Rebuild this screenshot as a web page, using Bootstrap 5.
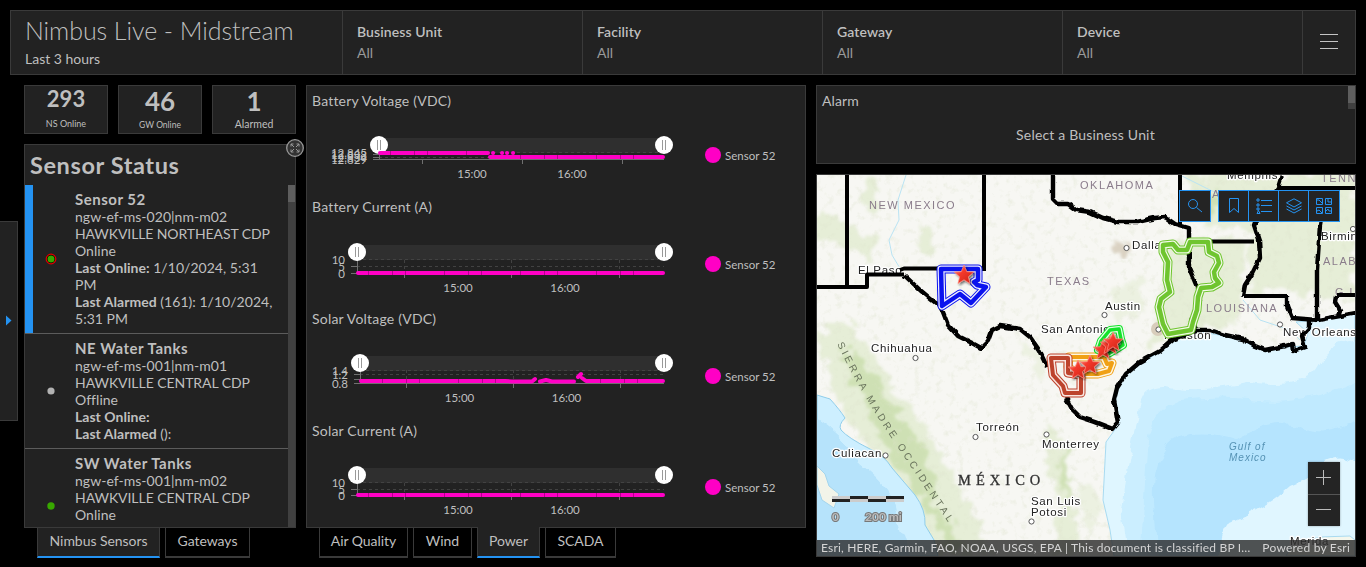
<!DOCTYPE html>
<html lang="en" data-bs-theme="dark">
<head>
<meta charset="utf-8">
<meta name="viewport" content="width=device-width, initial-scale=1">
<title>Nimbus Live - Midstream</title>
<link href="https://cdn.jsdelivr.net/npm/bootstrap@5.3.0/dist/css/bootstrap.min.css" rel="stylesheet">
<style>
:root{--pane:#222;--edge:#3a3a3a;--ink:#bfbfbf;--accent:#2493f2;--pink:#ff00c5}
body{background:#000;color:var(--ink);font-family:Lato,"Noto Sans",sans-serif;font-size:14px;line-height:17px;width:1366px;height:567px;overflow:hidden}
h1,h2,h3,h4{color:var(--ink)!important}
.pane{background:var(--pane);border:1px solid var(--edge)}
.topbar{height:65px}
.brand{width:331px;padding:0 14px}
.brand h1{font-size:25px;font-weight:300;line-height:30px;margin:4px 0 5px;letter-spacing:-.06px;white-space:nowrap}
.filter{width:240px;border-left:1px solid var(--edge);padding:10px 14px;line-height:21px}
.filter b{font-weight:600;letter-spacing:.1px}
.filter span{color:#9a9a9a}
.menu{border-left:1px solid var(--edge)}
.gauge{width:84px;height:49px;text-align:center;white-space:nowrap}
.gauge strong{display:block;font-size:22px;line-height:26px}
.gauge small{display:block;font-size:9px;line-height:24px}
.left-col{width:272px}.mid-col{width:500px}.right-col{width:540px}
.listbox{height:384px}
.listbox h2{font-size:23.5px;font-weight:700;line-height:40px;height:40px;margin:0;padding:0 0 0 5px;letter-spacing:.6px}
.rows{height:342px;overflow:hidden}
.item{border-bottom:1px solid #5c5c5c;display:flex;white-space:nowrap}
.item .dot{width:51px;flex:none;display:flex;justify-content:center;align-items:center}
.item .txt{padding:5px 0 6px;margin-left:-1px;letter-spacing:.03px}
.item h3{font-size:15px;font-weight:700;line-height:18px;margin:0;letter-spacing:.5px}
.item.on{box-shadow:inset 8px 0 var(--accent)}
.track{width:7px;background:#404040}
.track i{display:block;height:17px;background:#5e5e5e}
.tabbar{height:30px}
.tabbar button{background:#000;color:var(--ink);border:1px solid var(--edge);border-top:0;border-bottom-width:2px;height:30px;padding:0 0 3px;font-size:14px;letter-spacing:-.05px}
.tabbar button.on{background:var(--pane);border-bottom-color:var(--accent);margin-top:-1px;height:31px;padding-bottom:2px}
.charts{height:443px}
.chart h4{font-size:14px;font-weight:400;line-height:30px;height:30px;margin:0;padding-left:5px;letter-spacing:.2px}
.key{font-size:11.5px;padding-left:8px;height:18px}
.key i{width:16px;height:16px;border-radius:50%;background:var(--pink);margin-right:4px}
.plot text{font-size:11.5px;fill:var(--ink)}
.band{fill:#2f2f2f}.grid-dash{stroke:#424242;stroke-dasharray:3 3}.axis{stroke:#707070}
.data{stroke:var(--pink);stroke-width:4;stroke-linecap:round;stroke-linejoin:round;fill:none}
.gaps{stroke:#b7008e;stroke-width:4;stroke-dasharray:1 23 1 12 1 38}
.alarm{height:79px;letter-spacing:.08px}
.mapbox{height:383px}
.tool{height:32px;background:#242424;border:1px solid var(--accent)}
.tool span{width:30px;display:flex;align-items:center;justify-content:center}
.tool span+span{border-left:1px solid var(--accent)}
.tool svg{stroke:var(--accent);fill:none}
.credit{height:16px;background:rgba(45,45,45,.82);font-size:12px;line-height:16px;color:#d4d4d4;padding:0 5px 0 4px;white-space:nowrap}
.credit span:first-child{letter-spacing:.19px}.credit span:last-child{letter-spacing:.22px}
.zoomer{right:15px;bottom:30px;width:32px;background:#242424;box-shadow:0 0 2px #0005}
.drawer{left:-1px;top:221px;width:19px;height:200px}
.grow-btn{right:-9px;top:-6px}
.city{font:11.5px "Liberation Sans",Arial,sans-serif;fill:#222;letter-spacing:.65px;stroke:#fff;stroke-width:2.5;paint-order:stroke;stroke-linejoin:round}
.region{font:11px "Liberation Sans",Arial,sans-serif;fill:#8a7c8b;letter-spacing:1.5px}
</style>
</head>
<body class="position-relative">
<svg width="0" height="0" class="position-absolute"><defs>
<g id="grip"><circle r="9" fill="#fff"/><path d="M-1.500-5V5M1.500-5V5" stroke="#999" stroke-width="1"/></g>
</defs></svg>

<div class="drawer pane position-absolute"><svg class="d-block" width="17" height="198"><path d="M6 93.500l5.500 5-5.500 5z" fill="#2493f2"/></svg></div>

<header class="topbar pane d-flex" style="margin:10px 10px 0">
  <div class="brand"><h1>Nimbus Live - Midstream</h1><div>Last 3 hours</div></div>
  <div class="filter d-flex flex-column"><b>Business Unit</b><span>All</span></div>
  <div class="filter d-flex flex-column"><b>Facility</b><span>All</span></div>
  <div class="filter d-flex flex-column"><b>Gateway</b><span>All</span></div>
  <div class="filter d-flex flex-column"><b>Device</b><span>All</span></div>
  <div class="menu flex-fill d-flex align-items-start justify-content-center" style="padding-top:22px"><svg width="18" height="17"><path d="M0 1.500h18M0 8.500h18M0 15.500h18" stroke="#c4c4c4"/></svg></div>
</header>

<main class="d-flex" style="padding:10px 10px 0 24px;gap:10px">
  <section class="left-col">
    <div class="d-flex justify-content-between" style="margin-bottom:10px">
      <div class="gauge pane"><strong>293</strong><small>NS Online</small></div>
      <div class="gauge pane"><strong style="font-size:26px;line-height:31px">46</strong><small style="font-size:8.500px;line-height:17px">GW Online</small></div>
      <div class="gauge pane"><strong style="font-size:26px;line-height:31px">1</strong><small style="font-size:10.500px;line-height:15px">Alarmed</small></div>
    </div>
    <div class="listbox pane position-relative">
      <svg class="grow-btn position-absolute" width="18" height="18" fill="none" stroke="#999"><circle cx="9" cy="9" r="8.300" fill="#333" stroke-width="1.300"/><path d="M5 7.500V5h2.500M5 5l3 3M10.500 5H13v2.500M13 5l-3 3M5 10.500V13h2.500M5 13l3-3M13 10.500V13h-2.500M13 13l-3-3"/></svg>
      <h2>Sensor Status</h2>
      <div class="rows d-flex">
        <div class="flex-fill">
          <div class="item on"><div class="dot"><svg width="12" height="12"><circle cx="6" cy="6" r="4.800" fill="#000" stroke="#e60000" stroke-width="1.200"/><circle cx="6" cy="6" r="3.500" fill="#38a800"/></svg></div>
            <div class="txt"><h3>Sensor 52</h3>ngw-ef-ms-020|nm-m02<br><span style="letter-spacing:-.1px">HAWKVILLE NORTHEAST CDP</span><br>Online<br><b>Last Online:</b> 1/10/2024, 5:31<br>PM<br><b>Last Alarmed</b> (161): 1/10/2024,<br>5:31 PM</div></div>
          <div class="item"><div class="dot"><svg width="8" height="8"><circle cx="4" cy="4" r="3.600" fill="#b2b2b2"/></svg></div>
            <div class="txt"><h3>NE Water Tanks</h3>ngw-ef-ms-001|nm-m01<br><span style="letter-spacing:-.06px">HAWKVILLE CENTRAL CDP</span><br>Offline<br><b>Last Online:</b><br><b>Last Alarmed</b> ():</div></div>
          <div class="item"><div class="dot"><svg width="8" height="8"><circle cx="4" cy="4" r="3.700" fill="#38a800"/></svg></div>
            <div class="txt"><h3>SW Water Tanks</h3>ngw-ef-ms-001|nm-m02<br><span style="letter-spacing:-.06px">HAWKVILLE CENTRAL CDP</span><br>Online<br><b>Last Online:</b> 1/10/2024<br><b>Last Alarmed</b> ():<br></div></div>
        </div>
        <div class="track"><i></i></div>
      </div>
    </div>
    <nav class="tabbar d-flex" style="padding-left:13px;gap:5px"><button class="on" style="width:123px">Nimbus Sensors</button><button style="width:85px">Gateways</button></nav>
  </section>

  <section class="mid-col">
    <div class="charts pane">
      <div class="chart" style="height:106px"><h4>Battery Voltage (VDC)</h4><div class="d-flex">
        <svg class="plot" width="390" height="76" viewBox="307 116 390 76">
          <rect class="band" x="379" y="138" width="285" height="15"/><path class="grid-dash" d="M379 152.500H664M379 157.500H664"/>
          <path class="axis" d="M373 154.500h6M373 157.500h6M373 159.500H664M379.500 153v7M422.500 159v5M522.500 159v5M622.500 159v5"/>
          <g text-anchor="end"><text x="367" y="157">12.845</text><text x="367" y="159">12.838</text><text x="367" y="162">12.834</text><text x="367" y="164">12.829</text></g>
          <use href="#grip" x="379" y="145"/><use href="#grip" x="664" y="145"/>
          <path class="data" d="M380 153H488M493 153h.1M502 153h.1M507 153h.1M513 153h.1M490 157H663"/><path class="gaps" d="M390 153H486M520 157H660"/>
          <g text-anchor="middle"><text x="472" y="178">15:00</text><text x="572" y="178">16:00</text></g>
        </svg><div class="key d-flex align-items-center" style="margin-top:30px"><i></i>Sensor 52</div></div></div>
      <div class="chart" style="height:112px"><h4>Battery Current (A)</h4><div class="d-flex">
        <svg class="plot" width="390" height="80" viewBox="307 222 390 80">
          <rect class="band" x="357" y="245" width="307" height="15"/><path class="grid-dash" d="M357 259.500H664M357 266.500H664M404.500 260v13M511.500 260v13M619.500 260v13"/>
          <path class="axis" d="M351 266.500h6M351 273.500H664M357.500 253v20M404.500 273v5M511.500 273v5M619.500 273v5"/>
          <g text-anchor="end"><text x="345" y="264">10</text><text x="345" y="271">5</text><text x="345" y="278">0</text></g>
          <use href="#grip" x="357" y="252"/><use href="#grip" x="664" y="252"/>
          <path class="data" d="M358 273H663"/><path class="gaps" d="M368 273H655"/>
          <g text-anchor="middle"><text x="458" y="292">15:00</text><text x="565" y="292">16:00</text></g>
        </svg><div class="key d-flex align-items-center" style="margin-top:33px"><i></i>Sensor 52</div></div></div>
      <div class="chart" style="height:112px"><h4>Solar Voltage (VDC)</h4><div class="d-flex">
        <svg class="plot" width="390" height="80" viewBox="307 334 390 80">
          <rect class="band" x="360" y="356" width="304" height="15"/><path class="grid-dash" d="M360 370.500H664M360 374.500H664M406.500 370v13M513.500 370v13M620.500 370v13"/>
          <path class="axis" d="M354 374.500h6M354 379.500h6M354 383.500H664M360.500 364v19M406.500 383v5M513.500 383v5M620.500 383v5"/>
          <g text-anchor="end"><text x="348" y="375">1.4</text><text x="348" y="379">1.2</text><text x="348" y="388">0.8</text></g>
          <use href="#grip" x="360" y="363"/><use href="#grip" x="664" y="363"/>
          <path class="data" d="M361 381H505L512 381.500H532L535 379M540 381.500L546 380L552 381.500H574M578 377L581 374M582 378L586 381H663"/><path class="gaps" d="M382 381H530M600 381H655"/>
          <g text-anchor="middle"><text x="459.500" y="402">15:00</text><text x="566.500" y="402">16:00</text></g>
        </svg><div class="key d-flex align-items-center" style="margin-top:33px"><i></i>Sensor 52</div></div></div>
      <div class="chart" style="height:111px"><h4>Solar Current (A)</h4><div class="d-flex">
        <svg class="plot" width="390" height="80" viewBox="307 446 390 80">
          <rect class="band" x="357" y="468" width="307" height="15"/><path class="grid-dash" d="M357 482.500H664M357 489.500H664M404.500 483v13M511.500 483v13M619.500 483v13"/>
          <path class="axis" d="M351 489.500h6M351 495.500H664M357.500 476v19M404.500 495v5M511.500 495v5M619.500 495v5"/>
          <g text-anchor="end"><text x="345" y="487">10</text><text x="345" y="494">5</text><text x="345" y="500">0</text></g>
          <use href="#grip" x="357" y="475"/><use href="#grip" x="664" y="475"/>
          <path class="data" d="M358 495H663"/><path class="gaps" d="M368 495H655"/>
          <g text-anchor="middle"><text x="458" y="514">15:00</text><text x="565" y="514">16:00</text></g>
        </svg><div class="key d-flex align-items-center" style="margin-top:32px"><i></i>Sensor 52</div></div></div>
    </div>
    <nav class="tabbar d-flex" style="padding-left:13px;gap:5px"><button style="width:89px">Air Quality</button><button style="width:59px">Wind</button><button class="on" style="width:63px">Power</button><button style="width:71px">SCADA</button></nav>
  </section>

  <section class="right-col">
    <div class="alarm pane d-flex" style="margin-bottom:10px">
      <div class="flex-fill"><div style="padding:6px 0 0 5px">Alarm</div><div class="text-center" style="margin-top:17px;padding-left:6px;letter-spacing:.18px">Select a Business Unit</div></div>
      <div class="track" style="height:23px"><i></i></div>
    </div>
    <div class="mapbox pane position-relative overflow-hidden">
      <svg class="d-block" width="538" height="381" viewBox="817 175 538 381">
        <defs>
          <filter id="rough" x="-20%" y="-20%" width="140%" height="140%"><feTurbulence type="fractalNoise" baseFrequency=".07" numOctaves="4" seed="4"/><feDisplacementMap in="SourceGraphic" scale="26" xChannelSelector="R" yChannelSelector="G"/><feGaussianBlur stdDeviation="1.800"/></filter>
          <filter id="speck" x="0" y="0" width="100%" height="100%"><feTurbulence type="fractalNoise" baseFrequency=".14" numOctaves="5" seed="9"/><feColorMatrix values="0 0 0 0 .72 0 0 0 0 .76 0 0 0 0 .6 3 0 0 0 -1.620"/><feComposite in2="SourceGraphic" operator="in"/></filter>
          <filter id="jag" x="-5%" y="-5%" width="110%" height="110%"><feTurbulence type="fractalNoise" baseFrequency=".15" numOctaves="1" seed="2"/><feDisplacementMap in="SourceGraphic" scale="4" xChannelSelector="R" yChannelSelector="G"/></filter>
          <filter id="shelf" x="-10%" y="-10%" width="120%" height="120%"><feTurbulence type="fractalNoise" baseFrequency=".06" numOctaves="3" seed="5"/><feDisplacementMap in="SourceGraphic" scale="10" xChannelSelector="R" yChannelSelector="G"/><feGaussianBlur stdDeviation=".6"/></filter>
          <filter id="drop"><feDropShadow dx="1.500" dy="1.500" stdDeviation="1" flood-opacity=".6"/></filter>
          <linearGradient id="red" x2="1" y2="1"><stop stop-color="#ff9c8c"/><stop offset=".4" stop-color="#f4392b"/><stop offset="1" stop-color="#c91f14"/></linearGradient>
          <g id="pin" filter="url(#drop)"><path d="M0-10L2.800-3.300 9.800-3 4.300 1.800 6 8.500 0 4.800-6 8.500-4.300 1.800-9.800-3-2.800-3.300z" fill="url(#red)" stroke="#ff8c80" stroke-width=".7"/></g>
          <path id="blueArea" d="M941 269H978V280L974 282L977 285L986 287L971 303L960 294L942 306Z"/>
          <path id="greenArea" d="M1163 245L1173 244L1178 250H1187L1190 242H1208L1209 252L1217 256L1219 263L1214 272L1215 278L1219 283L1212 287L1201 288L1198 297L1197 310L1193 322L1191 330L1168 334L1163 324L1159 307L1161 299L1170 292L1167 280L1168 262L1163 252Z"/>
          <path id="limeArea" d="M1110 330L1119 329L1121 339L1123 345L1115 350L1108 354L1098 350L1101 341Z"/>
          <path id="goldArea" d="M1069 357H1104L1107 364L1112 363L1109 371L1098 374L1077 374L1068 367Z"/>
          <path id="rustArea" d="M1051 358H1068V373L1081 375V393H1065L1063 386L1053 375Z"/>
        </defs>
        <rect x="817" y="175" width="538" height="381" fill="#f7f7f3"/>
        <g filter="url(#rough)" fill="#e1ebcf">
          <path d="M817 210L850 225L880 240L870 258L845 250L817 235ZM920 225h14v28h-14ZM862 178l16 5-2 28-10 2zM817 330L850 320L880 365L900 400L930 430L950 470L975 520L990 556H925L915 520L890 480L870 450L850 420L835 390Z" opacity=".8"/>
          <path d="M1170 240L1250 240L1235 320L1150 345L1160 300ZM1190 175H1355V300L1250 290L1255 230L1190 225ZM1040 430L1055 430L1070 490L1085 556H1050L1060 510Z" opacity=".8"/>
          <path d="M1080 480L1100 500L1095 540L1085 525ZM1020 340L1050 360L1040 380ZM1110 290L1140 280L1145 310L1115 320Z" opacity=".5"/>
        </g>
        <g filter="url(#rough)" fill="#bfd89d" opacity=".6"><path d="M840 350L855 350L890 405L925 450L940 510L965 550L950 555L920 500L880 440Z"/><path d="M1062 440L1070 445L1068 510L1060 480ZM1200 190L1240 200L1200 220Z"/></g>
        <rect x="817" y="175" width="538" height="381" filter="url(#speck)" opacity=".4"/>
        <g fill="none" stroke="#b9e3f3"><path d="M906 175L898 200L899 220L889 240L892 255L901 270M1180 175L1210 190L1235 200M1243 300L1260 320L1290 330L1300 340"/></g>
        <path d="M1355 313L1318 320L1296 322L1308 333L1304 346L1285 347L1265 351L1243 341L1225 336L1196 331L1174 339L1160 351L1126 374L1117 388L1115 402L1119 424L1106 442L1103 500L1110 530L1114 556H1355Z" fill="#dff6ff" stroke="#a8daf0"/>
        <path d="M1360 338Q1330 340 1318 365T1250 382Q1200 394 1165 386Q1140 385 1138 412Q1128 460 1122 510L1130 566H1365Z" fill="#cbeeff" filter="url(#shelf)"/>
        <path d="M1365 380Q1300 405 1260 400T1180 400Q1150 410 1147 450L1140 566H1365Z" fill="#c0eaff" filter="url(#shelf)"/>
        <path d="M1365 418Q1320 440 1300 426Q1270 420 1235 440Q1195 428 1170 442Q1152 465 1154 500L1158 566H1365Z" fill="#b5e4fe" filter="url(#shelf)"/>
        <path d="M1219 560Q1220 535 1230 522Q1270 505 1290 486Q1320 474 1326 461Q1345 452 1360 466V560Z" fill="#e0f6ff" filter="url(#shelf)"/><path d="M1286 556L1292 545L1320 537L1350 536L1355 540V556Z" fill="#f4f7ed" stroke="#a8daf0"/>
        <path d="M817 395L830 399Q840 410 845 418Q838 425 841 430Q848 438 870 449Q884 455 892 468L915 495Q926 510 925 525L934 540L938 556H817Z" fill="#cdefff" stroke="#8fcdea"/>
        <path d="M810 415Q845 435 860 465Q895 490 895 515L910 560H810Z" fill="#b6e3fb" filter="url(#shelf)"/>
        <path d="M817 466L825 474L829 486L839 494L834 508L822 500L817 485Z" fill="#f2f4e9" stroke="#a3d5ed"/>
        <ellipse cx="1122" cy="247" rx="9" ry="8" fill="#dad2c2" filter="url(#rough)"/><ellipse cx="1158" cy="329" rx="7" ry="7" fill="#d8cdbb"/>

        <g class="city"><text x="858" y="274">El Paso</text><text x="1132" y="249">Dalla</text><text x="1105" y="310">Austin</text><text x="1041" y="333">San Antonio</text><text x="1164" y="339">Houston</text><text x="871" y="352">Chihuahua</text><text x="976" y="431">Torreón</text><text x="1042" y="448">Monterrey</text><text x="832" y="457">Culiacan</text><text x="1031" y="505">San Luis</text><text x="1031" y="516">Potosi</text><text x="1283" y="336">New Orleans</text><text x="1321" y="240">Birming</text><text x="1227" y="179">Memphis</text><text x="1290" y="545">Merida</text></g>
        <g class="region"><text x="869" y="209">NEW MEXICO</text><text x="1080" y="189">OKLAHOMA</text><text x="1047" y="285">TEXAS</text><text x="1206" y="312">LOUISIANA</text><text x="1321" y="182">TENNE</text><text x="1323" y="265">ALABA</text><text x="1212" y="198">ARKANSAS</text><text x="1335" y="296">G U</text></g>
        <path id="sierra" d="M837 344Q862 395 890 436T953 530" fill="none"/><text font-family="Liberation Sans" font-size="10" fill="#69735c" letter-spacing="3.100"><textPath href="#sierra">SIERRA MADRE OCCIDENTAL</textPath></text>
        <text x="958" y="485" font-family="Liberation Serif" font-size="14.500" letter-spacing="3.700" fill="#333" stroke="#333" stroke-width=".3" textLength="86">MÉXICO</text>
        <g font-family="Liberation Sans" font-size="10" font-style="italic" letter-spacing="1" fill="#5592b4"><text x="1229" y="450">Gulf of</text><text x="1229" y="461">Mexico</text></g>
        <g fill="#fff" stroke="#555"><circle cx="1126.500" cy="248" r="2.600"/><circle cx="1104.500" cy="315" r="2.600"/><circle cx="1158.500" cy="329.500" r="2.600"/><circle cx="1280" cy="324.500" r="2.600"/><circle cx="915.500" cy="358" r="2.600"/><circle cx="975.500" cy="437" r="2.600"/><circle cx="1046.500" cy="434.500" r="2.600"/><circle cx="885.500" cy="455.500" r="2.600"/><circle cx="1031.500" cy="521.500" r="2.600"/><circle cx="1353" cy="229" r="2.600"/></g>

        <g fill="none" stroke="#000" stroke-width="4" stroke-linejoin="round">
          <path d="M847 175V287M817 287H867V274.500H904M900 270L904 268.500H984V175M984 271V260M1180 175V225M1189 241.500H1254M1244 296H1287M1278 188H1355M1355 295H1337M1189 228V268"/>
          <g filter="url(#jag)" stroke-width="4.400"><path d="M904 275L920 290L932 300L941 307L948 325L958 336L972 343L981 348L988 341L992 330L1000 326L1020 329L1030 337L1039 350L1047 367M1066 398L1072 409L1080 417L1095 422L1113 429L1118 423L1114 400L1117 388L1126 374L1140 362L1160 351L1174 339L1196 330L1210 330L1225 335L1243 339L1255 346L1265 350L1285 346L1292 344L1293 351L1305 347L1302 336L1309 328V318"/>
          <path d="M1053 175V199L1058 204L1068 204L1076 210L1090 212L1103 218L1118 222L1137 222L1155 218L1165 217L1175 224L1189 228V268L1197 287L1200 300L1192 322L1196 332M1282 175L1278 188L1268 205L1258 215L1254 225L1259 240L1260 258L1252 274L1245 285L1243 296M1287 296V306L1292 318L1318 320L1340 316L1356 313M1326 188L1320 225L1317 270L1317 319M1336 296L1335 302L1340 310L1338 316"/></g>
        </g>
        <g fill="none" stroke-linejoin="round">
          <g stroke="#0b13ee"><use href="#blueArea" stroke-width="9"/><use href="#blueArea" stroke="#eef" stroke-width="7"/><use href="#blueArea" stroke-width="4.500"/></g>
          <g stroke="#6fc52f"><use href="#greenArea" stroke-width="9"/><use href="#greenArea" stroke="#f2fae9" stroke-width="7"/><use href="#greenArea" stroke-width="4.500"/></g>
          <g stroke="#f0a015"><use href="#goldArea" stroke-width="9"/><use href="#goldArea" stroke="#fff5df" stroke-width="7"/><use href="#goldArea" stroke-width="4"/></g>
          <g stroke="#bd432c"><use href="#rustArea" stroke-width="9"/><use href="#rustArea" stroke="#f9e5df" stroke-width="7"/><use href="#rustArea" stroke-width="4"/></g>
          <g stroke="#13e32a"><use href="#limeArea" stroke-width="8"/><use href="#limeArea" stroke="#e2ffe5" stroke-width="6"/><use href="#limeArea" stroke-width="3.500"/></g>
        </g>
        <use href="#pin" x="964" y="275"/>
        <g><use href="#pin" x="1078" y="370"/><use href="#pin" x="1090" y="365"/><use href="#pin" x="1103" y="350"/><use href="#pin" x="1110" y="345"/><use href="#pin" x="1113" y="342"/></g>
        <path d="M832 496h72v6h-72z" fill="#ccc"/><path d="M832 499h18v3h-18zM850 496h18v3h-18zM868 499h18v3h-18zM886 496h18v3h-18z" fill="#222"/>
        <g fill="#bbb" stroke="#777" stroke-width="2" paint-order="stroke" font-family="Lato" font-size="12" font-weight="700"><text x="832" y="521">0</text><text x="865" y="521">200 mi</text></g>
      </svg>
      <div class="position-absolute d-flex" style="right:15px;top:15px;gap:7px">
        <div class="tool d-flex"><span><svg width="16" height="16"><circle cx="6" cy="6" r="4.500"/><path d="M9.500 9.500L15 14"/></svg></span></div>
        <div class="tool d-flex"><span style="width:29px"><svg width="12" height="16"><path d="M1.500.5h9v14L6 10.500l-4.500 4z"/></svg></span><span><svg width="16" height="16"><path d="M5 2.500h11M5 7.500h11M5 13.500h11M1 1h2v2H1zM1 6h2v2H1zM1 10h2v2H1zM1 15.500h3l-1.500-3z"/></svg></span><span><svg width="18" height="16"><path d="M9 .8l7.500 4L9 9 1.500 4.800zM1.500 8L9 12l7.500-4M1.500 11L9 15l7.500-4"/></svg></span><span style="width:31px"><svg width="18" height="18"><path d="M1.500 1.500h6v6h-6zM10.500 1.500h6v6h-6zM1.500 10.500h6v6h-6zM10.500 10.500h6v6h-6zM2 3h2l3 3M13 2v3h3M2 14l2-1 3 3M11 14l2-2 1 2h2"/></svg></span></div>
      </div>
      <div class="zoomer position-absolute"><svg class="d-block" width="32" height="64"><path d="M8 15.500h15M15.500 8v15M8 47.500h15" stroke="#bbb"/><path d="M0 32.500h32" stroke="#555"/></svg></div>
      <div class="credit position-absolute bottom-0 start-0 end-0 d-flex justify-content-between"><span>Esri, HERE, Garmin, FAO, NOAA, USGS, EPA | This document is classified BP I…</span><span>Powered by Esri</span></div>
    </div>
  </section>
</main>
<script src="https://cdn.jsdelivr.net/npm/bootstrap@5.3.0/dist/js/bootstrap.bundle.min.js"></script>
</body>
</html>
